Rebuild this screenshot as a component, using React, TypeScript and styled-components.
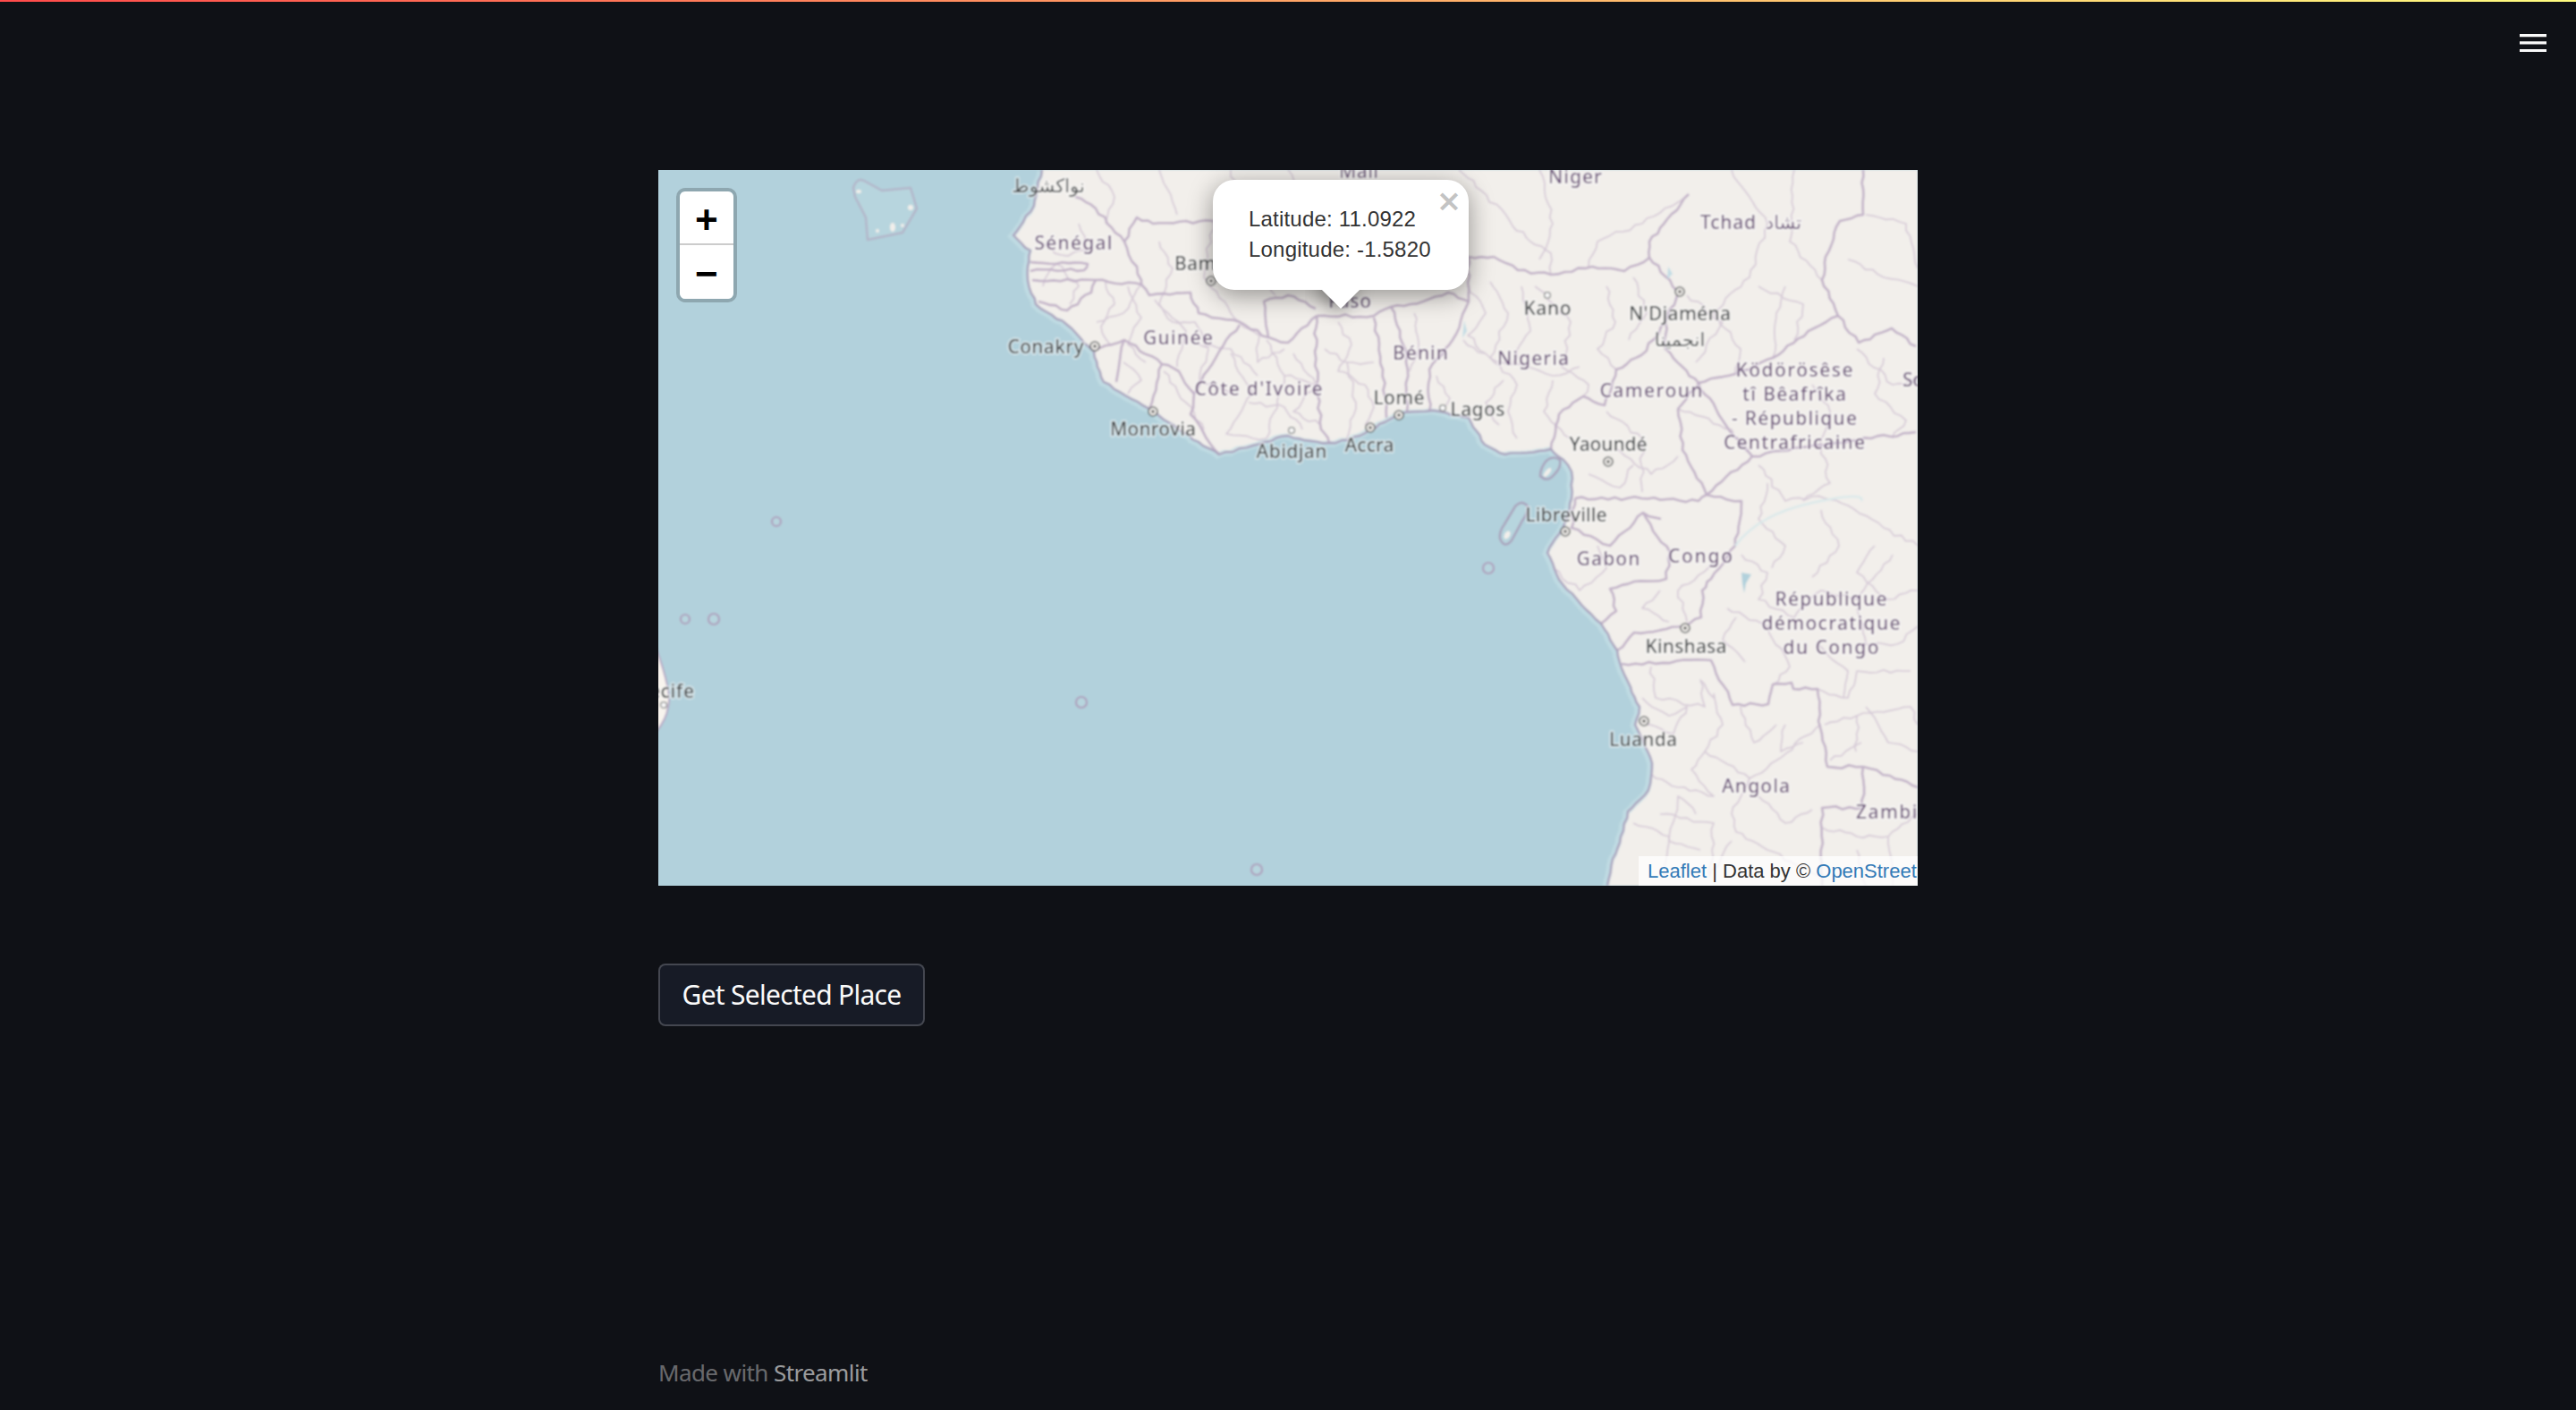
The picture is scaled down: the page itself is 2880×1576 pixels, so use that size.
import React from "react";
import styled, { createGlobalStyle } from "styled-components";

const GlobalStyle = createGlobalStyle`
  html, body { margin: 0; padding: 0; background: #0f1116; }
  * { box-sizing: border-box; }
`;

const Page = styled.div`
  position: relative;
  min-height: 1576px;
  display: flex;
  flex-direction: column;
  align-items: center;
  background: #0f1116;
  overflow: hidden;
`;

const Decoration = styled.div`
  position: absolute;
  top: 0;
  left: 0;
  right: 0;
  height: 2px;
  background: linear-gradient(90deg, #ff4b4b, #fffd80);
`;

const MenuButton = styled.button`
  position: absolute;
  top: 28px;
  right: 28px;
  width: 40px;
  height: 40px;
  padding: 0;
  border: 0;
  background: none;
  color: #fafafa;
  display: flex;
  align-items: center;
  justify-content: center;
`;

const Main = styled.main`
  width: 1408px;
  flex: 1;
  display: flex;
  flex-direction: column;
  align-items: flex-start;
  padding-top: 190px;
`;

const MapFrame = styled.div`
  position: relative;
  width: 1408px;
  height: 800px;
  overflow: hidden;
  background: #b2d1dc;
`;

const MapArt = styled.svg`
  display: block;
  width: 1408px;
  height: 800px;
`;

const Label = styled.text<{ $kind: "city" | "country" }>`
  font-family: "Noto Sans", "DejaVu Sans", sans-serif;
  font-size: 21px;
  font-weight: 500;
  fill: ${(p) => (p.$kind === "city" ? "#3f4344" : "#6c5379")};
  stroke: rgba(255, 255, 255, 0.6);
  stroke-width: 3px;
  paint-order: stroke;
  stroke-linejoin: round;
`;

const ZoomControl = styled.div`
  position: absolute;
  top: 20px;
  left: 20px;
  border: 4px solid rgba(0, 0, 0, 0.2);
  border-radius: 10px;
  background-clip: padding-box;
  overflow: hidden;
`;

const ZoomButton = styled.div<{ $last?: boolean }>`
  width: 60px;
  height: 60px;
  padding-top: ${(p) => (p.$last ? "10px" : "11px")};
  display: flex;
  align-items: center;
  justify-content: center;
  background: #fff;
  color: #000;
  font: bold 44px/46px "Liberation Mono", monospace;
  border-bottom: ${(p) => (p.$last ? "0" : "2px solid #ccc")};
`;

const Popup = styled.div`
  position: absolute;
  top: 11px;
  left: 620px;
  width: 286px;
  height: 123px;
  padding: 27px 40px;
  background: #fff;
  border-radius: 24px;
  box-shadow: 0 6px 28px rgba(0, 0, 0, 0.4);
  color: #333;
  font: 24px/33.6px "Liberation Sans", Arial, sans-serif;
  letter-spacing: 0.2px;
`;

const PopupLine = styled.div`
  white-space: nowrap;
`;

const PopupClose = styled.span`
  position: absolute;
  top: 5px;
  right: 4px;
  width: 36px;
  height: 36px;
  color: #c3c3c3;
  text-align: center;
  letter-spacing: 0;
  font: bold 34px/36px "DejaVu Sans", Verdana, sans-serif;
`;

const PopupTipClip = styled.div`
  position: absolute;
  left: 103px;
  top: 123px;
  width: 80px;
  height: 40px;
  overflow: hidden;
`;

const PopupTip = styled.div`
  width: 34px;
  height: 34px;
  margin: -20px auto 0;
  background: #fff;
  transform: rotate(45deg);
  box-shadow: 0 6px 20px rgba(0, 0, 0, 0.4);
`;

const Attribution = styled.div`
  position: absolute;
  right: 0;
  bottom: 0;
  width: 312px;
  height: 33px;
  padding-left: 10px;
  overflow: hidden;
  white-space: nowrap;
  background: rgba(255, 255, 255, 0.75);
  color: #333;
  font: 22px/33px "Liberation Sans", Arial, sans-serif;
`;

const AttributionLink = styled.a`
  color: #337ab7;
  text-decoration: none;
`;

const ActionButton = styled.button`
  margin-top: 87px;
  width: 298px;
  height: 70px;
  padding: 0;
  border: 2px solid rgba(250, 250, 250, 0.2);
  border-radius: 8px;
  background: #171b26;
  color: #fafafa;
  font: 400 30px/1 "Noto Sans", sans-serif;
  letter-spacing: -0.72px;
`;

const Footer = styled.footer`
  margin-top: auto;
  margin-bottom: 23px;
  color: rgba(250, 250, 250, 0.4);
  font: 400 26px/38px "Noto Sans", sans-serif;
  letter-spacing: -0.6px;
`;

const FooterBrand = styled.a`
  color: rgba(250, 250, 250, 0.6);
  text-decoration: none;
`;

type P = [number, number];

function wiggle(pts: P[], amp: number, seed: number): string {
  let s = seed * 9301 + 49297;
  const rnd = () => {
    s = (s * 9301 + 49297) % 233280;
    return s / 233280 - 0.5;
  };
  let d = `M${pts[0][0]} ${pts[0][1]}`;
  for (let i = 1; i < pts.length; i++) {
    const [ax, ay] = pts[i - 1];
    const [bx, by] = pts[i];
    const len = Math.hypot(bx - ax, by - ay);
    const n = Math.max(1, Math.ceil(len / 8));
    for (let k = 1; k <= n; k++) {
      const t = k / n;
      const j = k === n ? 0 : rnd() * amp;
      const px = ax + (bx - ax) * t + (-(by - ay) / (len || 1)) * j;
      const py = ay + (by - ay) * t + ((bx - ax) / (len || 1)) * j;
      d += `L${px.toFixed(1)} ${py.toFixed(1)}`;
    }
  }
  return d;
}

const coast: P[] = [
  [429, 0], [424, 20], [420, 40], [408, 58], [397, 73], [406, 82], [416, 90], [413, 108], [413, 123], [417, 138], [422, 150],
  [440, 162], [457, 173], [472, 188], [487, 203], [491, 220], [498, 237], [522, 252], [549, 267], [565, 279], [581, 290],
  [604, 304], [627, 318], [665, 308], [704, 297], [730, 303], [750, 305], [772, 302], [796, 290], [812, 282], [828, 273], [850, 270],
  [874, 270], [906, 277], [915, 292], [924, 307], [947, 318], [972, 316], [998, 312], [1012, 324], [1021, 337], [1021, 367], [1017, 385],
  [1007, 407], [994, 428], [1002, 446], [1011, 463], [1032, 486], [1054, 507], [1072, 537], [1077, 557], [1087, 578], [1097, 600],
  [1092, 620], [1102, 642], [1111, 663], [1107, 693], [1084, 717], [1076, 745], [1067, 770], [1061, 800],
];
const coastLine = wiggle(coast, 2.6, 3);
const landPath = coastLine + "L1408 800L1408 0Z";

const majorBorders: P[][] = [
  [[906, 97], [934, 97], [961, 112], [998, 117], [1044, 108], [1080, 113], [1108, 98]],
  [[1152, 27], [1128, 55], [1108, 80], [1108, 98], [1131, 123], [1140, 136]],
  [[1163, 238], [1204, 228], [1246, 210], [1292, 177], [1319, 163], [1342, 193], [1379, 177], [1406, 197]],
  [[1347, 0], [1347, 50], [1321, 57], [1305, 97], [1301, 123], [1319, 163]],
  [[998, 312], [1007, 273], [1034, 253], [1058, 263], [1071, 223], [1099, 207], [1126, 170], [1140, 137]],
  [[1126, 170], [1126, 200], [1145, 220], [1163, 238], [1140, 267], [1145, 313], [1172, 363]],
  [[862, 270], [862, 223], [888, 190], [906, 147], [906, 97]],
  [[837, 270], [837, 207], [819, 153]],
  [[814, 277], [810, 223], [800, 165]],
  [[736, 163], [800, 163], [819, 153], [855, 147], [883, 137], [906, 147]],
  [[736, 163], [734, 203], [741, 290], [750, 305]],
  [[466, 30], [489, 43], [521, 80], [540, 123], [540, 128]],
  [[521, 80], [535, 53], [553, 60], [620, 57], [650, 55]],
  [[418, 123], [489, 123], [540, 128]],
  [[416, 103], [480, 105], [476, 112], [416, 113]],
  [[425, 147], [457, 157], [484, 137], [489, 123]],
  [[540, 128], [549, 140], [595, 137], [604, 160], [650, 170], [682, 187], [704, 193], [736, 163]],
  [[487, 203], [521, 190], [563, 217], [582, 225], [599, 250], [595, 273], [627, 318]],
  [[521, 190], [512, 237]],
  [[549, 267], [563, 217]],
  [[599, 250], [627, 203], [650, 173]],
  [[682, 187], [677, 147], [704, 140], [735, 155]],
  [[1121, 390], [1101, 383], [1117, 410], [1131, 427], [1127, 457], [1091, 460], [1064, 468], [1071, 493], [1054, 507]],
  [[1025, 367], [1099, 367], [1163, 370], [1172, 363], [1211, 370], [1204, 420], [1177, 457], [1167, 470], [1166, 500], [1147, 510], [1127, 513], [1091, 517], [1072, 537]],
  [[1077, 552], [1177, 548], [1201, 598], [1241, 597], [1246, 575], [1267, 573], [1269, 580], [1296, 580], [1299, 623], [1307, 667], [1347, 667], [1377, 677], [1408, 690]],
  [[1347, 667], [1347, 713], [1301, 713], [1301, 800]],
  [[1172, 363], [1223, 320], [1278, 310], [1356, 300], [1406, 293]],
  [[1223, 320], [1190, 280], [1163, 238]],
  [[1025, 367], [1021, 400], [1064, 420], [1101, 383]],
];

const minorBorders: P[][] = [
  [[895, 0], [920, 23], [952, 57], [975, 80], [998, 93], [998, 117]],
  [[1152, 27], [1100, 60], [1050, 80], [1040, 108]],
  [[985, 0], [1000, 60], [985, 100]],
  [[1200, 0], [1240, 60], [1220, 120], [1180, 160], [1210, 200], [1204, 228]],
  [[1270, 0], [1265, 80], [1301, 123]],
  [[1260, 130], [1250, 160], [1246, 210]],
  [[930, 125], [950, 160], [930, 210], [960, 240], [950, 270], [960, 300]],
  [[980, 130], [1020, 170], [1010, 220], [1040, 240], [1034, 253]],
  [[1060, 130], [1070, 170], [1050, 200], [1071, 223]],
  [[900, 190], [930, 210], [1000, 230], [1030, 220]],
  [[1060, 270], [1100, 300], [1100, 360]],
  [[1140, 267], [1200, 290], [1223, 320]],
  [[1290, 240], [1310, 270], [1300, 310], [1310, 350], [1280, 370]],
  [[1370, 210], [1360, 250], [1395, 280], [1380, 300]],
  [[1230, 330], [1260, 370], [1290, 365], [1330, 375], [1370, 400], [1408, 420]],
  [[1211, 430], [1240, 450], [1230, 480], [1270, 500], [1300, 470], [1340, 480], [1380, 430]],
  [[1195, 490], [1240, 510], [1265, 555], [1246, 575]],
  [[1296, 580], [1330, 590], [1340, 560], [1400, 560]],
  [[1296, 530], [1330, 560], [1325, 590]],
  [[1304, 620], [1340, 610], [1339, 650]],
  [[1340, 610], [1400, 600], [1408, 620]],
  [[1110, 555], [1115, 590], [1170, 600], [1165, 570], [1180, 590]],
  [[1100, 590], [1130, 610], [1150, 600], [1135, 630], [1100, 620]],
  [[1180, 585], [1190, 620], [1170, 650], [1220, 680], [1250, 660], [1300, 620]],
  [[1170, 650], [1155, 670], [1180, 700], [1140, 690], [1110, 675]],
  [[1220, 680], [1200, 720], [1205, 740], [1240, 760], [1300, 790]],
  [[1120, 720], [1180, 730], [1175, 790], [1200, 750]],
  [[1160, 720], [1140, 700], [1130, 750], [1165, 760]],
  [[1301, 735], [1340, 745], [1375, 745], [1408, 720]],
  [[1375, 745], [1380, 800]],
  [[1180, 440], [1140, 470], [1150, 505]],
  [[1120, 470], [1100, 490], [1130, 505]],
  [[1000, 445], [1030, 470], [1060, 445], [1050, 420]],
  [[620, 57], [610, 120], [640, 160], [650, 170]],
  [[560, 80], [575, 110], [560, 150], [590, 180], [580, 220]],
  [[490, 170], [520, 160], [540, 128]],
  [[470, 60], [480, 90], [450, 95], [425, 80]],
  [[640, 205], [665, 250], [635, 295], [680, 300]],
  [[680, 190], [700, 230], [680, 300]],
  [[700, 230], [740, 240]],
  [[604, 195], [640, 200], [670, 230]],
  [[745, 200], [770, 215], [800, 215]],
  [[770, 215], [780, 260], [770, 300]],
  [[660, 100], [690, 140]],
  [[704, 0], [720, 30], [705, 80], [735, 110]],
  [[790, 15], [850, 30], [880, 70], [906, 97]],
  [[640, 0], [655, 55]],
  [[490, 0], [510, 30], [500, 60]],
  [[560, 0], [580, 50]],
  [[1350, 50], [1395, 60], [1408, 110]],
  [[1330, 100], [1370, 120], [1408, 130]],
  [[430, 130], [445, 105], [470, 130], [460, 150]],
  [[500, 125], [510, 150], [495, 175], [505, 195]],
  [[525, 130], [540, 165], [525, 195], [545, 215]],
  [[555, 145], [575, 170], [600, 170], [615, 200]],
  [[615, 200], [605, 235], [640, 250]],
  [[520, 215], [540, 235], [525, 250]],
  [[565, 225], [590, 260], [610, 290]],
  [[650, 170], [672, 185], [670, 215], [700, 200]],
  [[710, 205], [735, 240], [710, 270], [740, 285]],
  [[660, 260], [700, 265], [720, 290]],
  [[760, 170], [775, 195], [760, 225], [790, 240]],
  [[790, 240], [800, 265], [790, 285]],
  [[845, 160], [850, 200], [840, 225]],
  [[870, 230], [885, 255], [875, 270]],
  [[905, 130], [925, 160], [905, 185], [925, 205]],
  [[945, 235], [925, 260], [940, 285]],
  [[965, 130], [975, 180], [955, 215]],
  [[1000, 235], [990, 270], [1020, 300]],
  [[1090, 120], [1105, 160], [1085, 190]],
  [[1150, 140], [1190, 170], [1160, 215]],
  [[1230, 130], [1280, 150], [1270, 190]],
  [[1070, 310], [1110, 340], [1140, 320]],
  [[1040, 340], [1075, 355], [1090, 330]],
  [[1340, 200], [1380, 240], [1408, 235]],
  [[1240, 350], [1230, 390], [1260, 420], [1245, 445]],
  [[1300, 380], [1320, 420], [1290, 455]],
  [[1360, 420], [1340, 450], [1375, 480], [1408, 470]],
  [[1205, 500], [1190, 525], [1215, 550]],
  [[1340, 490], [1350, 530], [1385, 530], [1408, 510]],
  [[1350, 600], [1375, 640], [1408, 650]],
  [[1310, 660], [1345, 640]],
  [[1260, 620], [1255, 650], [1280, 640]],
  [[1210, 600], [1225, 640], [1250, 620]],
  [[1090, 730], [1130, 745], [1125, 790]],
  [[1230, 700], [1260, 730], [1290, 715]],
  [[1340, 760], [1350, 800]],
];

type LabelDef = { t: string; x: number; y: number; w: number; k: "city" | "country" };
const labels: LabelDef[] = [
  { t: "Sénégal", x: 464, y: 89, w: 87, k: "country" },
  { t: "Bamako", x: 619, y: 112, w: 84, k: "city" },
  { t: "Conakry", x: 433, y: 205, w: 85, k: "city" },
  { t: "Guinée", x: 581, y: 195, w: 78, k: "country" },
  { t: "Côte d'Ivoire", x: 671, y: 252, w: 143, k: "country" },
  { t: "Monrovia", x: 553, y: 297, w: 96, k: "city" },
  { t: "Abidjan", x: 708, y: 322, w: 79, k: "city" },
  { t: "Mali", x: 783, y: 9, w: 44, k: "country" },
  { t: "Niger", x: 1025, y: 15, w: 60, k: "country" },
  { t: "Tchad", x: 1196, y: 66, w: 62, k: "country" },
  { t: "Faso", x: 773, y: 154, w: 48, k: "country" },
  { t: "Kano", x: 994, y: 162, w: 53, k: "city" },
  { t: "N'Djaména", x: 1142, y: 168, w: 114, k: "city" },
  { t: "Bénin", x: 852, y: 212, w: 62, k: "country" },
  { t: "Nigeria", x: 978, y: 218, w: 80, k: "country" },
  { t: "Lomé", x: 828, y: 262, w: 57, k: "city" },
  { t: "Lagos", x: 916, y: 275, w: 61, k: "city" },
  { t: "Accra", x: 795, y: 315, w: 55, k: "city" },
  { t: "Cameroun", x: 1110, y: 254, w: 115, k: "country" },
  { t: "Ködörösêse", x: 1270, y: 231, w: 131, k: "country" },
  { t: "tî Bêafrîka", x: 1270, y: 258, w: 116, k: "country" },
  { t: "- République", x: 1270, y: 285, w: 140, k: "country" },
  { t: "Centrafricaine", x: 1270, y: 312, w: 158, k: "country" },
  { t: "Yaoundé", x: 1062, y: 314, w: 87, k: "city" },
  { t: "Libreville", x: 1015, y: 393, w: 91, k: "city" },
  { t: "Gabon", x: 1062, y: 442, w: 71, k: "country" },
  { t: "Congo", x: 1165, y: 439, w: 72, k: "country" },
  { t: "Kinshasa", x: 1149, y: 540, w: 91, k: "city" },
  { t: "République", x: 1311, y: 487, w: 125, k: "country" },
  { t: "démocratique", x: 1311, y: 514, w: 155, k: "country" },
  { t: "du Congo", x: 1311, y: 541, w: 107, k: "country" },
  { t: "Luanda", x: 1101, y: 644, w: 76, k: "city" },
  { t: "Angola", x: 1227, y: 696, w: 76, k: "country" },
  { t: "Zambia", x: 1380, y: 725, w: 82, k: "country" },
  { t: "Soudan", x: 1428, y: 242, w: 74, k: "country" },
  { t: "Recife", x: 8, y: 590, w: 64, k: "city" },
];

const arabicLabels: { t: string; x: number; y: number; k: "city" | "country"; s: number }[] = [
  { t: "نواكشوط", x: 436, y: 25, k: "city", s: 21 },
  { t: "تشاد", x: 1258, y: 66, k: "country", s: 21 },
  { t: "انجمينا", x: 1142, y: 197, k: "city", s: 21 },
];

const bigDots: P[] = [[618, 124], [488, 197], [553, 270], [1142, 136], [828, 274], [796, 288], [1062, 326], [1014, 404], [1148, 512], [1102, 616]];
const smallDots: P[] = [[708, 291], [994, 140], [877, 266], [6, 598]];
const atolls: [number, number, number][] = [[132, 393, 5], [30, 502, 5], [62, 502, 6], [473, 595, 6], [928, 445, 6], [669, 782, 6]];

const MapDrawing = () => (
  <MapArt viewBox="0 0 1408 800" aria-label="map">
    <defs>
      <filter id="soft" x="-5%" y="-5%" width="110%" height="110%">
        <feGaussianBlur stdDeviation="0.85" />
      </filter>
    </defs>
    <g filter="url(#soft)">
      <rect x="-20" y="-20" width="1448" height="840" fill="#b2d1dc" />
      <path d={landPath} fill="#f2efeb" />
      <path d={coastLine} fill="none" stroke="#c4e0e6" strokeWidth="7" transform="translate(-2 1)" opacity="0.7" />
      <path d="M-4 530 Q 16 585 11 600 Q 9 615 -4 630Z" fill="#f8f4ee" stroke="#b7a9c4" strokeWidth="2" />
      <path d="M218 20 Q 222 8 230 12 L250 23 L282 20 L289 43 L273 70 L234 78 L232 53 L220 30Z" fill="#b7d5de" stroke="#b3b6c9" strokeWidth="2.5" strokeLinejoin="round" />
      <ellipse cx="224" cy="24" rx="3" ry="2" fill="#f2efeb" />
      <ellipse cx="282" cy="42" rx="3" ry="3" fill="#f2efeb" />
      <ellipse cx="262" cy="64" rx="3" ry="5" fill="#f2efeb" />
      <ellipse cx="245" cy="68" rx="2" ry="2" fill="#f2efeb" />
      <ellipse cx="273" cy="62" rx="2" ry="2" fill="#f2efeb" />
      <path d="M941 412 Q 940 404 946 396 L 958 376 Q 966 368 972 376 Q 972 384 966 392 L 954 414 Q 946 424 941 412Z" fill="#b7d5de" stroke="#a9a3bc" strokeWidth="2.5" />
      <ellipse cx="949" cy="408" rx="3" ry="5" transform="rotate(30 949 408)" fill="#f2efeb" />
      <path d="M986 342 Q 986 334 992 326 Q 1000 318 1008 324 Q 1010 332 1002 340 Q 994 350 986 342Z" fill="#b7d5de" stroke="#a9a3bc" strokeWidth="2.5" />
      <ellipse cx="994" cy="338" rx="2.5" ry="6" transform="rotate(40 994 338)" fill="#f2efeb" />
      {minorBorders.map((b, i) => (
        <path key={i} d={wiggle(b, 5, i + 20)} fill="none" stroke="#d6cad7" strokeWidth="1.7" strokeLinejoin="round" />
      ))}
      {majorBorders.map((b, i) => (
        <path key={i} d={wiggle(b, 3.6, i + 5)} fill="none" stroke="#c2b2c8" strokeWidth="2.6" strokeLinejoin="round" />
      ))}
      <path d={coastLine} fill="none" stroke="#aca3bd" strokeWidth="2.4" strokeLinejoin="round" />
      <path d="M1211 450 L1222 452 L1216 462 L1214 473 L1212 462Z" fill="#b2d1dc" />
      <path d="M1129 108 L1134 116 L1128 122Z" fill="#c4dde5" />
      <path d="M901 168 L904 180 L899 188Z" fill="#c4dde5" />
      <path d="M1204 420 Q 1230 385 1290 372 T 1345 370" fill="none" stroke="#dbe9ea" strokeWidth="2.5" />
      {atolls.map(([x, y, r], i) => (
        <circle key={i} cx={x} cy={y} r={r} fill="#b7d5de" stroke="#ad9fbc" strokeWidth="2.2" />
      ))}
      {bigDots.map(([x, y], i) => (
        <g key={i}>
          <circle cx={x} cy={y} r="5" fill="#f2efeb" stroke="#5c6060" strokeWidth="1.6" />
          <circle cx={x} cy={y} r="1.8" fill="#555" />
        </g>
      ))}
      {smallDots.map(([x, y], i) => (
        <circle key={i} cx={x} cy={y} r="3.4" fill="#fafafa" stroke="#7d8080" strokeWidth="1.3" />
      ))}
      {labels.map((l) => (
        <Label key={l.t} $kind={l.k} x={l.x} y={l.y} textAnchor="middle" textLength={l.w} lengthAdjust="spacing">
          {l.t}
        </Label>
      ))}
      {arabicLabels.map((l) => (
        <Label key={l.t} $kind={l.k} x={l.x} y={l.y} textAnchor="middle" style={{ fontSize: l.s }}>
          {l.t}
        </Label>
      ))}
    </g>
  </MapArt>
);

export default function App() {
  return (
    <>
      <GlobalStyle />
      <Page>
        <Decoration />
        <MenuButton aria-label="menu">
          <svg width="30" height="20" viewBox="0 0 30 20">
            <path d="M0 0h30v3.2H0zM0 8.2h30v3.4H0zM0 17h30v3.2H0z" fill="currentColor" />
          </svg>
        </MenuButton>
        <Main>
          <MapFrame>
            <MapDrawing />
            <ZoomControl>
              <ZoomButton>+</ZoomButton>
              <ZoomButton $last>−</ZoomButton>
            </ZoomControl>
            <Popup>
              <PopupClose>×</PopupClose>
              <PopupLine>Latitude: 11.0922</PopupLine>
              <PopupLine>Longitude: -1.5820</PopupLine>
              <PopupTipClip>
                <PopupTip />
              </PopupTipClip>
            </Popup>
            <Attribution>
              <AttributionLink href="#">Leaflet</AttributionLink> | Data by © <AttributionLink href="#">OpenStreetMap</AttributionLink>, under ODbL.
            </Attribution>
          </MapFrame>
          <ActionButton>Get Selected Place</ActionButton>
          <Footer>
            Made with <FooterBrand href="#">Streamlit</FooterBrand>
          </Footer>
        </Main>
      </Page>
    </>
  );
}
